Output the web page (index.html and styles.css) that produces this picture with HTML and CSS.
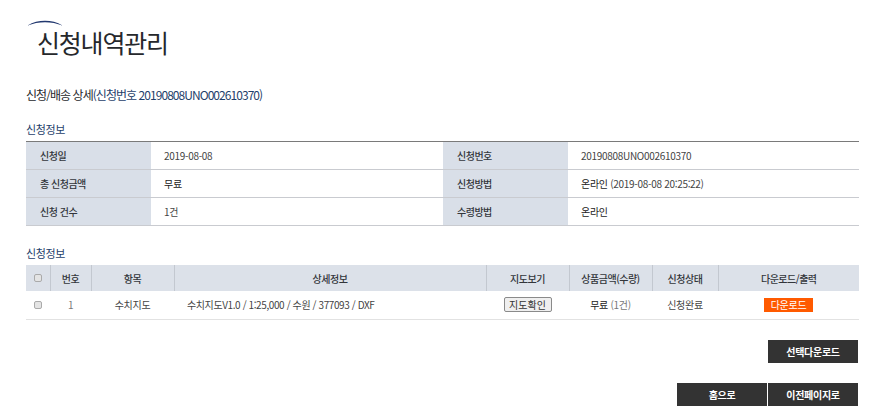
FILE: index.html
```html
<!DOCTYPE html>
<html lang="ko">
<head>
    <meta charset="UTF-8">
    <meta name="viewport" content="width=device-width, initial-scale=1.0">
    <title>신청내역관리</title>
    <link rel="stylesheet" href="styles.css">
</head>
<body>
    <div class="page-title">
        <svg class="title-arc" width="36" height="6" viewBox="0 0 36 6">
            <path d="M0.5 5.5C6 2 12 0.7 18 0.7S30 2 35.5 5.5C30 3.4 24 2.2 18 2.2S6 3.4 0.5 5.5Z" fill="#22386f"/>
        </svg>
        <h1>신청내역관리</h1>
    </div>
    <p class="detail-head">신청/배송 상세<span class="detail-no">(신청번호 20190808UNO002610370)</span></p>

    <h2 class="section-title first">신청정보</h2>
    <table class="info-table">
        <colgroup>
            <col class="c-th"><col class="c-td"><col class="c-th"><col>
        </colgroup>
        <tr>
            <th>신청일</th><td>2019-08-08</td>
            <th>신청번호</th><td>20190808UNO002610370</td>
        </tr>
        <tr>
            <th>총 신청금액</th><td class="dark">무료</td>
            <th>신청방법</th><td><span class="dark">온라인</span> (2019-08-08 20:25:22)</td>
        </tr>
        <tr>
            <th>신청 건수</th><td>1건</td>
            <th>수령방법</th><td class="dark">온라인</td>
        </tr>
    </table>

    <h2 class="section-title">신청정보</h2>
    <table class="list-table">
        <colgroup>
            <col class="w-check"><col class="w-no"><col class="w-item"><col>
            <col class="w-map"><col class="w-price"><col class="w-state"><col class="w-down">
        </colgroup>
        <thead>
            <tr>
                <th><input type="checkbox" class="check"></th>
                <th>번호</th>
                <th>항목</th>
                <th>상세정보</th>
                <th>지도보기</th>
                <th>상품금액(수량)</th>
                <th>신청상태</th>
                <th>다운로드/출력</th>
            </tr>
        </thead>
        <tbody>
            <tr>
                <td><input type="checkbox" class="check"></td>
                <td class="light">1</td>
                <td>수치지도</td>
                <td class="detail-cell">수치지도V1.0 / 1:25,000 / 수원 / 377093 / DXF</td>
                <td><button class="map-btn">지도확인</button></td>
                <td><span class="dark">무료</span> <span class="light">(1건)</span></td>
                <td>신청완료</td>
                <td><a class="down-btn">다운로드</a></td>
            </tr>
        </tbody>
    </table>

    <div class="btn-row select-row">
        <a class="dark-btn">선택다운로드</a>
    </div>
    <div class="btn-row bottom-row">
        <a class="dark-btn">홈으로</a>
        <a class="dark-btn">이전페이지로</a>
    </div>
</body>
</html>
```

FILE: styles.css
```css
* {
    box-sizing: border-box;
}
html, body {
    height: 417px;
    overflow: hidden;
}
body {
    margin: 0;
    padding: 20px 16px 0 26px;
    font-family: "Noto Sans CJK KR", "Noto Sans", sans-serif;
    font-size: 10px;
    letter-spacing: -0.3px;
    color: #444;
    background-color: #fff;
}
.page-title {
    height: 56px;
}
.title-arc {
    display: block;
    margin-left: 1px;
}
h1 {
    margin: -2px 0 0 11px;
    font-size: 25px;
    line-height: 36px;
    font-weight: 400;
    letter-spacing: -1.2px;
    color: #26282c;
}
.detail-head {
    margin: 10px 0 0;
    font-size: 12px;
    line-height: 18px;
    letter-spacing: -0.95px;
    color: #26282c;
}
.detail-no {
    color: #1f3f6b;
}
.section-title {
    margin: 19px 0 0;
    font-size: 11px;
    line-height: 16px;
    font-weight: 400;
    letter-spacing: -0.4px;
    color: #1f3f6b;
}
.section-title.first {
    margin-top: 17px;
}
table {
    width: 833px;
    border-collapse: collapse;
    table-layout: fixed;
}
.info-table {
    margin-top: 4px;
    border-top: 1px solid #7a7a7a;
}
.c-th {
    width: 125px;
}
.c-td {
    width: 292px;
}
.info-table th, .info-table td {
    height: 28px;
    padding: 0 0 0 14px;
    border-bottom: 1px solid #c9cbd0;
    text-align: left;
    font-size: 10px;
}
.info-table td {
    padding-left: 13px;
}
.info-table th {
    background-color: #d9dfe8;
    font-weight: 500;
    letter-spacing: -0.5px;
    color: #33363b;
}
.dark {
    color: #222;
}
.light {
    color: #777;
}
.list-table {
    margin-top: 4px;
}
.w-check { width: 24px; }
.w-no { width: 41px; }
.w-item { width: 83px; }
.w-map { width: 83px; }
.w-price { width: 83px; }
.w-state { width: 66px; }
.w-down { width: 141px; }
.list-table th {
    height: 26px;
    padding: 0;
    background-color: #dce1e9;
    border-left: 1px solid #c3c8d0;
    font-size: 10px;
    font-weight: 500;
    letter-spacing: -0.5px;
    color: #33363b;
}
.list-table th:first-child {
    border-left: 0;
}
.list-table td {
    height: 28px;
    padding: 0;
    border-bottom: 1px solid #e2e2e2;
    text-align: center;
    font-size: 10px;
}
.list-table td.detail-cell {
    padding-left: 13px;
    text-align: left;
    letter-spacing: -0.4px;
}
.check {
    display: block;
    appearance: none;
    width: 8px;
    height: 8px;
    margin: 0 auto;
    background-color: #e4e4e4;
    border: 1px solid #aaa;
    border-radius: 2px;
}
.map-btn {
    display: block;
    width: 48px;
    height: 15px;
    margin: 0 auto;
    padding: 0;
    background-color: #efefef;
    border: 1px solid #8a8a8a;
    border-radius: 2px;
    font-family: inherit;
    font-size: 10px;
    line-height: 13px;
    color: #333;
}
.down-btn {
    display: block;
    width: 49px;
    height: 14px;
    margin: 0 auto;
    background-color: #ff5a00;
    font-size: 10px;
    line-height: 14px;
    color: #fff;
}
.btn-row {
    display: flex;
    justify-content: flex-end;
    gap: 1px;
    width: 832px;
}
.select-row {
    margin-top: 20px;
}
.bottom-row {
    margin-top: 20px;
}
.dark-btn {
    display: block;
    width: 90px;
    height: 23px;
    background-color: #333;
    font-size: 10px;
    font-weight: 700;
    line-height: 23px;
    text-align: center;
    color: #fff;
}
```
